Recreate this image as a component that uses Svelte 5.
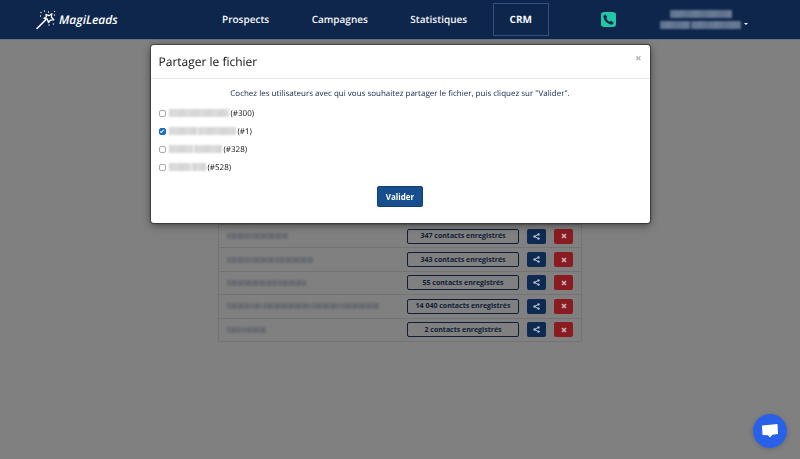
<script>
  const links = ['Prospects', 'Campagnes', 'Statistiques', 'CRM']
  const active = 'CRM'

  // `masks` are the widths of the hidden words of each name
  let users = $state([
    { id: 300, masks: [60], checked: false },
    { id: 1, masks: [28, 38], checked: true },
    { id: 328, masks: [24, 28], checked: false },
    { id: 528, masks: [22, 14], checked: false }
  ])

  const files = [
    { masks: [22, 38], count: '347' },
    { masks: [22, 24, 38], count: '343' },
    { masks: [50, 28], count: '55' },
    { masks: [22, 12, 48, 28, 38], count: '14 040' },
    { masks: [14, 24], count: '2' }
  ]
</script>

{#snippet masked(masks)}
  <span class="masked">
    {#each masks as width}
      <i style="width: {width}px"></i>
    {/each}
  </span>
{/snippet}

<header>
  <a class="brand" href="#home">
    <svg width="20" height="20" viewBox="0 0 20 20" aria-hidden="true">
      <path d="M1 18.5 10.5 9" stroke-width="1.6" />
      <path d="m10 4.5 3 1.200 2.800-2-.4 3.600 2.400 2.500-3.500.3-1.800 2.400-1.200-3.300-3.300-.8 2.500-1.600z" stroke-width="1.3" />
      <path d="M5 2.500v.1M8.500 1v.1M4.500 6v.1M18.500 5v.1M17.500 14v.1M13 15v.1M18.500 1.500v.1M12.500 2v.1" stroke-width="1.3" />
    </svg>
    <span>MagiLeads</span>
  </a>

  <nav>
    {#each links as link}
      <a href="#{link.toLowerCase()}" class:active={link === active}>{link}</a>
    {/each}
  </nav>

  <div class="tools">
    <button type="button" class="phone" aria-label="Téléphone">
      <svg width="15" height="15" viewBox="0 0 15 15" aria-hidden="true">
        <rect width="15" height="15" rx="3" fill="#22c7a6" />
        <path d="M4.600 2.500 6.300 5.100 5.200 6.300C5.900 7.900 7.100 9.100 8.700 9.800L9.900 8.700 12.500 10.400C12.400 12 11.300 12.700 10.200 12.500 6.300 12 3 8.700 2.500 4.800 2.400 3.700 3.100 2.600 4.600 2.500z" fill="#0e264c" />
      </svg>
    </button>
    <button type="button" class="account" aria-label="Compte">
      <span class="lines">
        {@render masked([62])}
        {@render masked([30, 50])}
      </span>
      <span class="caret"></span>
    </button>
  </div>
</header>

<main>
  <table>
    <tbody>
      {#each files as file}
        <tr>
          <td class="name">{@render masked(file.masks)}</td>
          <td class="actions">
            <div>
              <button type="button" class="count">{file.count} contacts enregistrés</button>
              <button type="button" class="share" aria-label="Partager">
                <svg width="7" height="7" viewBox="0 0 7 7" aria-hidden="true">
                  <path d="M5.500 1.300 1.500 3.500l4 2.200" fill="none" stroke="#b7c0cb" />
                  <circle cx="5.500" cy="1.400" r="1.200" />
                  <circle cx="1.500" cy="3.500" r="1.200" />
                  <circle cx="5.500" cy="5.600" r="1.200" />
                </svg>
              </button>
              <button type="button" class="remove" aria-label="Supprimer">
                <svg width="6" height="6" viewBox="0 0 6 6" aria-hidden="true">
                  <path d="m1 1 4 4M5 1 1 5" stroke="#c9b5b5" stroke-width="1.600" />
                </svg>
              </button>
            </div>
          </td>
        </tr>
      {/each}
    </tbody>
  </table>
</main>

<div class="overlay">
  <div class="modal" role="dialog" aria-modal="true" aria-labelledby="share-title">
    <div class="modal-header">
      <h1 id="share-title">Partager le fichier</h1>
      <button type="button" class="close" aria-label="Fermer">×</button>
    </div>
    <form onsubmit={(e) => e.preventDefault()}>
      <p>Cochez les utilisateurs avec qui vous souhaitez partager le fichier, puis cliquez sur "Valider".</p>
      <div class="users">
        {#each users as user}
          <label>
            <input type="checkbox" bind:checked={user.checked} />
            {@render masked(user.masks)}
            <span>(#{user.id})</span>
          </label>
        {/each}
      </div>
      <button type="submit" class="submit">Valider</button>
    </form>
  </div>
</div>

<button type="button" class="chat" aria-label="Discussion">
  <svg width="18" height="16" viewBox="0 0 18 16" aria-hidden="true">
    <path d="m1 2.500 15.500-1.500.5 10-5.500.7L9 14.500l-2-2.300L1.500 12z" fill="#fff" />
  </svg>
</button>

<style>
  :global(body) {
    background: #808080;
    font-family: 'Open Sans', 'Noto Sans', sans-serif;
    font-size: 8px;
    color: #111;
    text-rendering: geometricPrecision;
  }

  button {
    margin: 0;
    padding: 0;
    border: 0;
    background: none;
    font: inherit;
    color: inherit;
    cursor: pointer;
  }

  svg {
    display: block;
  }

  header {
    display: grid;
    grid-template-columns: 205fr 344fr 251fr;
    align-items: center;
    height: 40px;
    background: #0e264c;
    border-bottom: 1px solid #65748a;
    box-sizing: border-box;
  }

  .brand {
    display: flex;
    align-items: center;
    gap: 3px;
    padding-left: 36px;
    color: #fff;
    font-size: 12px;
    font-style: italic;
    font-weight: 600;
    text-decoration: none;
  }

  .brand path {
    fill: none;
    stroke: #fff;
    stroke-linecap: round;
    stroke-linejoin: round;
  }

  nav {
    display: flex;
    justify-content: space-between;
  }

  nav a {
    padding: 0 16px;
    border: 1px solid transparent;
    color: #f4f6f9;
    font-size: 10px;
    font-weight: 600;
    line-height: 31px;
    text-decoration: none;
  }

  nav a.active {
    border-color: #36517a;
    font-weight: 700;
  }

  .tools {
    display: flex;
    align-items: center;
    justify-content: space-between;
    padding: 0 52px;
  }

  .account {
    display: flex;
    align-items: flex-end;
    gap: 3px;
  }

  .lines {
    display: flex;
    flex-direction: column;
    align-items: center;
    gap: 3px;
  }

  .caret {
    margin-bottom: 4px;
    border: 2px solid transparent;
    border-top-color: #fff;
    border-bottom: 0;
  }

  .masked {
    display: inline-flex;
    gap: 1px;
    filter: blur(1px);
  }

  .masked i {
    height: 8px;
    background: repeating-linear-gradient(100deg, #d4d4d6, #dcdcdd 7px, #d4d4d6 13px);
  }

  .account .masked i {
    background: repeating-linear-gradient(100deg, #5d6f8c, #6b7b96 9px, #5d6f8c 17px);
  }

  main {
    padding-top: 184px;
  }

  table {
    width: 364px;
    height: 118px;
    margin: 0 auto;
    border: 1px solid #737373;
    border-collapse: collapse;
  }

  td {
    padding: 0;
    border-bottom: 1px solid #737373;
  }

  .name {
    padding-left: 8px;
  }

  .name .masked {
    display: flex;
  }

  .name .masked i {
    height: 6px;
    background: repeating-linear-gradient(100deg, #64686f, #707276 4px, #64686f 7px);
  }

  .actions div {
    display: flex;
    justify-content: flex-end;
    gap: 8px;
    padding-right: 8px;
  }

  .actions button {
    display: grid;
    place-items: center;
    width: 19px;
    height: 15px;
    border-radius: 2px;
  }

  .actions .count {
    width: 112px;
    border: 1px solid #101d36;
    color: #101d36;
    font-size: 7px;
    font-weight: 700;
    line-height: 12px;
  }

  .actions .share {
    background: #0e2a52;
    fill: #b7c0cb;
  }

  .actions .remove {
    background: #8a1b21;
  }

  .overlay {
    position: fixed;
    inset: 0;
    display: flex;
    align-items: flex-start;
    justify-content: center;
    padding-top: 45px;
  }

  .modal {
    width: 499px;
    max-width: 100%;
    background: #fff;
    border-radius: 3px;
    box-shadow: 0 2px 8px rgba(0, 0, 0, 0.5), 0 0 1px 1px rgba(0, 0, 0, 0.4);
  }

  .modal-header {
    display: flex;
    align-items: flex-start;
    justify-content: space-between;
    padding: 8px;
    border-bottom: 1px solid #e8e8e8;
  }

  h1 {
    margin: 0;
    color: #111;
    font-size: 12px;
    font-weight: 400;
    line-height: 17px;
  }

  .close {
    color: #aaa;
    font-size: 11px;
    font-weight: 700;
    line-height: 10px;
  }

  form {
    display: flex;
    flex-direction: column;
    align-items: center;
    padding: 8px 8px 16px;
  }

  p {
    margin: 0;
    color: #14264a;
    line-height: 14px;
  }

  .users {
    align-self: stretch;
    margin: 3px 0 10px;
  }

  label {
    display: flex;
    align-items: center;
    height: 18px;
  }

  label .masked {
    margin: 0 2px 0 3px;
  }

  input {
    appearance: none;
    display: grid;
    place-items: center;
    width: 7px;
    height: 7px;
    margin: 0;
    border: 1px solid #aaa;
    border-radius: 2px;
    box-sizing: border-box;
  }

  input:checked {
    border-color: #1b6ec2;
    background: #1b6ec2;
  }

  input:checked::after {
    content: '';
    width: 3px;
    height: 1px;
    border: solid #fff;
    border-width: 0 0 1px 1px;
    transform: rotate(-45deg);
  }

  .submit {
    width: 46px;
    border: 1px solid #123f78;
    border-radius: 2px;
    background: #174e8e;
    color: #fff;
    font-weight: 700;
    line-height: 19px;
  }

  .chat {
    position: fixed;
    right: 13px;
    bottom: 11px;
    display: grid;
    place-items: center;
    width: 34px;
    height: 34px;
    border-radius: 50%;
    background: #2860e8;
    box-shadow: 0 1px 5px rgba(0, 0, 0, 0.2);
  }
</style>
